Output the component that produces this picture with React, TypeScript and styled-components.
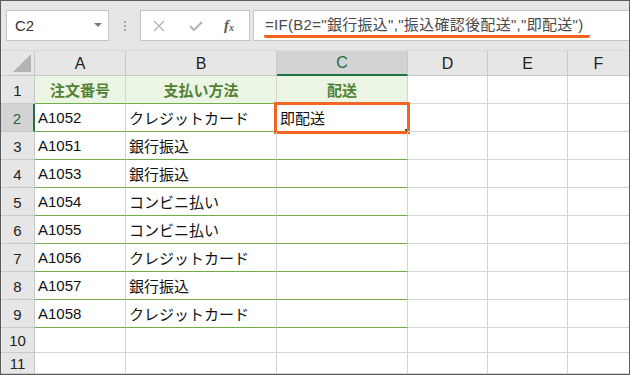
import styled, { createGlobalStyle } from 'styled-components';

const GlobalStyle = createGlobalStyle`
  html, body {
    margin: 0;
    padding: 0;
    background: #ffffff;
  }
  body {
    font-family: "Liberation Sans", "Noto Sans CJK JP", sans-serif;
  }
`;

const COLS = [34, 91, 151, 131, 80, 80, 61];
const LETTERS = ['A', 'B', 'C', 'D', 'E', 'F'];

const rows: [string, string, string][] = [
  ['A1052', 'クレジットカード', '即配送'],
  ['A1051', '銀行振込', ''],
  ['A1053', '銀行振込', ''],
  ['A1054', 'コンビニ払い', ''],
  ['A1055', 'コンビニ払い', ''],
  ['A1056', 'クレジットカード', ''],
  ['A1057', '銀行振込', ''],
  ['A1058', 'クレジットカード', ''],
];

export default function App() {
  return (
    <>
      <GlobalStyle />
      <Frame>
        <Toolbar>
          <NameBox>
            <span>C2</span>
            <DropArrow />
          </NameBox>
          <Grip>
            <i />
            <i />
            <i />
          </Grip>
          <FxButtons>
            <svg width="12" height="12" viewBox="0 0 12 12">
              <path d="M1 1 L11 11 M11 1 L1 11" stroke="#b3b3b3" strokeWidth="1.4" fill="none" />
            </svg>
            <svg width="14" height="12" viewBox="0 0 14 12">
              <path d="M1 6 L5 10 L13 2" stroke="#b3b3b3" strokeWidth="2" fill="none" />
            </svg>
            <FxLabel>
              f<sub>x</sub>
            </FxLabel>
          </FxButtons>
          <FormulaInput>
            <FormulaText>=IF(B2="銀行振込","振込確認後配送","即配送")</FormulaText>
          </FormulaInput>
        </Toolbar>

        <Sheet>
          <HeaderRow>
            <Corner>
              <svg width="18" height="18" viewBox="0 0 18 18">
                <polygon points="18,0 18,18 0,18" fill="#b4b4b4" />
              </svg>
            </Corner>
            {LETTERS.map((l, i) => (
              <ColHead key={l} $w={COLS[i + 1]} $active={l === 'C'} $last={i === LETTERS.length - 1}>
                {l}
              </ColHead>
            ))}
          </HeaderRow>

          <Row $h={28}>
            <RowHead>1</RowHead>
            <TitleCell $w={COLS[1]}>注文番号</TitleCell>
            <TitleCell $w={COLS[2]}>支払い方法</TitleCell>
            <TitleCell $w={COLS[3]}>配送</TitleCell>
            <Cell $w={COLS[4]} />
            <Cell $w={COLS[5]} />
            <Cell $w={COLS[6]} $last />
          </Row>

          {rows.map((r, i) => (
            <Row key={i} $h={28}>
              <RowHead $active={i === 0}>{i + 2}</RowHead>
              <Cell $w={COLS[1]} $green>{r[0]}</Cell>
              <Cell $w={COLS[2]} $green>{r[1]}</Cell>
              <Cell $w={COLS[3]} $green>
                {r[2]}
                {i === 0 && (
                  <Selection>
                    <FillHandle />
                  </Selection>
                )}
              </Cell>
              <Cell $w={COLS[4]} />
              <Cell $w={COLS[5]} />
              <Cell $w={COLS[6]} $last />
            </Row>
          ))}

          {[10, 11].map((n) => (
            <Row key={n} $h={n === 10 ? 25 : 22} $end={n === 11}>
              <RowHead>{n}</RowHead>
              {COLS.slice(1).map((w, i) => (
                <Cell key={i} $w={w} $last={i === COLS.length - 2} />
              ))}
            </Row>
          ))}
        </Sheet>
      </Frame>
    </>
  );
}

const Frame = styled.div`
  width: 630px;
  height: 375px;
  box-sizing: border-box;
  border: 1px solid #5b5b5b;
  overflow: hidden;
  background: #ffffff;
  display: flex;
  flex-direction: column;
`;

const Toolbar = styled.div`
  height: 49px;
  flex: none;
  background: #e6e6e6;
  display: flex;
  align-items: flex-start;
  padding-top: 9px;
  box-sizing: border-box;
`;

const NameBox = styled.div`
  margin-left: 5px;
  width: 103px;
  height: 31px;
  box-sizing: border-box;
  background: #fff;
  border: 1px solid #c6c6c6;
  display: flex;
  align-items: center;
  justify-content: space-between;
  padding: 0 6px 0 8px;
  font-size: 15px;
  color: #333;
`;

const DropArrow = styled.div`
  width: 0;
  height: 0;
  border-left: 4px solid transparent;
  border-right: 4px solid transparent;
  border-top: 4px solid #7a7a7a;
  margin-top: -2px;
`;

const Grip = styled.div`
  width: 31px;
  height: 31px;
  display: flex;
  flex-direction: column;
  align-items: center;
  justify-content: center;
  gap: 2px;

  i {
    width: 2px;
    height: 2px;
    background: #a8a8a8;
  }
`;

const FxButtons = styled.div`
  width: 110px;
  height: 31px;
  box-sizing: border-box;
  background: #fff;
  border: 1px solid #c6c6c6;
  display: flex;
  align-items: center;
  padding: 0 8px 0 12px;
  gap: 24px;
`;

const FxLabel = styled.span`
  font-family: "Liberation Serif", serif;
  font-style: italic;
  font-weight: bold;
  font-size: 15px;
  color: #5a5a5a;
  margin-left: -3px;

  sub {
    font-size: 10px;
    vertical-align: baseline;
    position: relative;
    top: 1px;
  }
`;

const FormulaInput = styled.div`
  margin-left: 3px;
  flex: 1;
  height: 31px;
  box-sizing: border-box;
  background: #fff;
  border: 1px solid #c6c6c6;
  border-right: none;
  display: flex;
  align-items: center;
  padding-left: 12px;
`;

const FormulaText = styled.span`
  font-size: 15px;
  color: #4a4a4a;
  letter-spacing: 0.3px;
  padding: 0 7px 0 1px;
  margin-left: -2px;
  margin-top: 2px;
  border-bottom: 3px solid #f0641e;
  border-radius: 2px;
  line-height: 20px;
`;

const Sheet = styled.div`
  flex: 1;
  display: flex;
  flex-direction: column;
  background: #fff;
`;

const HeaderRow = styled.div`
  height: 26px;
  flex: none;
  box-sizing: border-box;
  display: flex;
  background: #e6e6e6;
  border-top: 1px solid #dadada;
`;

const Corner = styled.div`
  width: 34px;
  box-sizing: border-box;
  border-right: 1px solid #c8c8c8;
  border-bottom: 1px solid #c8c8c8;
  display: flex;
  align-items: flex-end;
  justify-content: flex-end;
  padding: 0 3px 3px 0;
`;

const ColHead = styled.div<{ $w: number; $active?: boolean; $last?: boolean }>`
  width: ${(p) => p.$w}px;
  flex: ${(p) => (p.$last ? '1' : 'none')};
  box-sizing: border-box;
  display: flex;
  align-items: center;
  justify-content: center;
  font-size: 16px;
  color: ${(p) => (p.$active ? '#1d6b3f' : '#222')};
  background: ${(p) => (p.$active ? '#d3d3d3' : '#e6e6e6')};
  border-right: ${(p) => (p.$last ? 'none' : '1px solid #c8c8c8')};
  border-bottom: ${(p) => (p.$active ? '2px solid #217346' : '1px solid #c8c8c8')};
  padding-top: 1px;
`;

const Row = styled.div<{ $h: number; $end?: boolean }>`
  height: ${(p) => p.$h}px;
  flex: ${(p) => (p.$end ? '1' : 'none')};
  display: flex;
`;

const RowHead = styled.div<{ $active?: boolean }>`
  width: 34px;
  flex: none;
  box-sizing: border-box;
  display: flex;
  align-items: center;
  justify-content: center;
  font-size: 15px;
  color: ${(p) => (p.$active ? '#1d6b3f' : '#222')};
  background: ${(p) => (p.$active ? '#d3d3d3' : '#e6e6e6')};
  border-right: ${(p) => (p.$active ? '2px solid #217346' : '1px solid #c8c8c8')};
  border-bottom: 1px solid #c8c8c8;
  padding-top: 1px;
`;

const Cell = styled.div<{ $w: number; $green?: boolean; $last?: boolean }>`
  position: relative;
  width: ${(p) => p.$w}px;
  flex: ${(p) => (p.$last ? '1' : 'none')};
  box-sizing: border-box;
  display: flex;
  align-items: center;
  padding: 0 3px 1px 3px;
  font-size: 15px;
  color: #111;
  white-space: nowrap;
  border-right: ${(p) => (p.$last ? 'none' : '1px solid #d4d4d4')};
  border-bottom: 1px solid ${(p) => (p.$green ? '#70ad47' : '#d4d4d4')};
`;

const TitleCell = styled(Cell).attrs({ $green: true })`
  justify-content: center;
  background: #ebf5e3;
  font-weight: bold;
  color: #548235;
`;

const Selection = styled.div`
  position: absolute;
  left: -3px;
  top: -2px;
  right: -3px;
  bottom: -3px;
  border: 3px solid #f26522;
  pointer-events: none;
`;

const FillHandle = styled.div`
  position: absolute;
  right: 0;
  bottom: 0;
  width: 2px;
  height: 2px;
  background: #217346;
`;
